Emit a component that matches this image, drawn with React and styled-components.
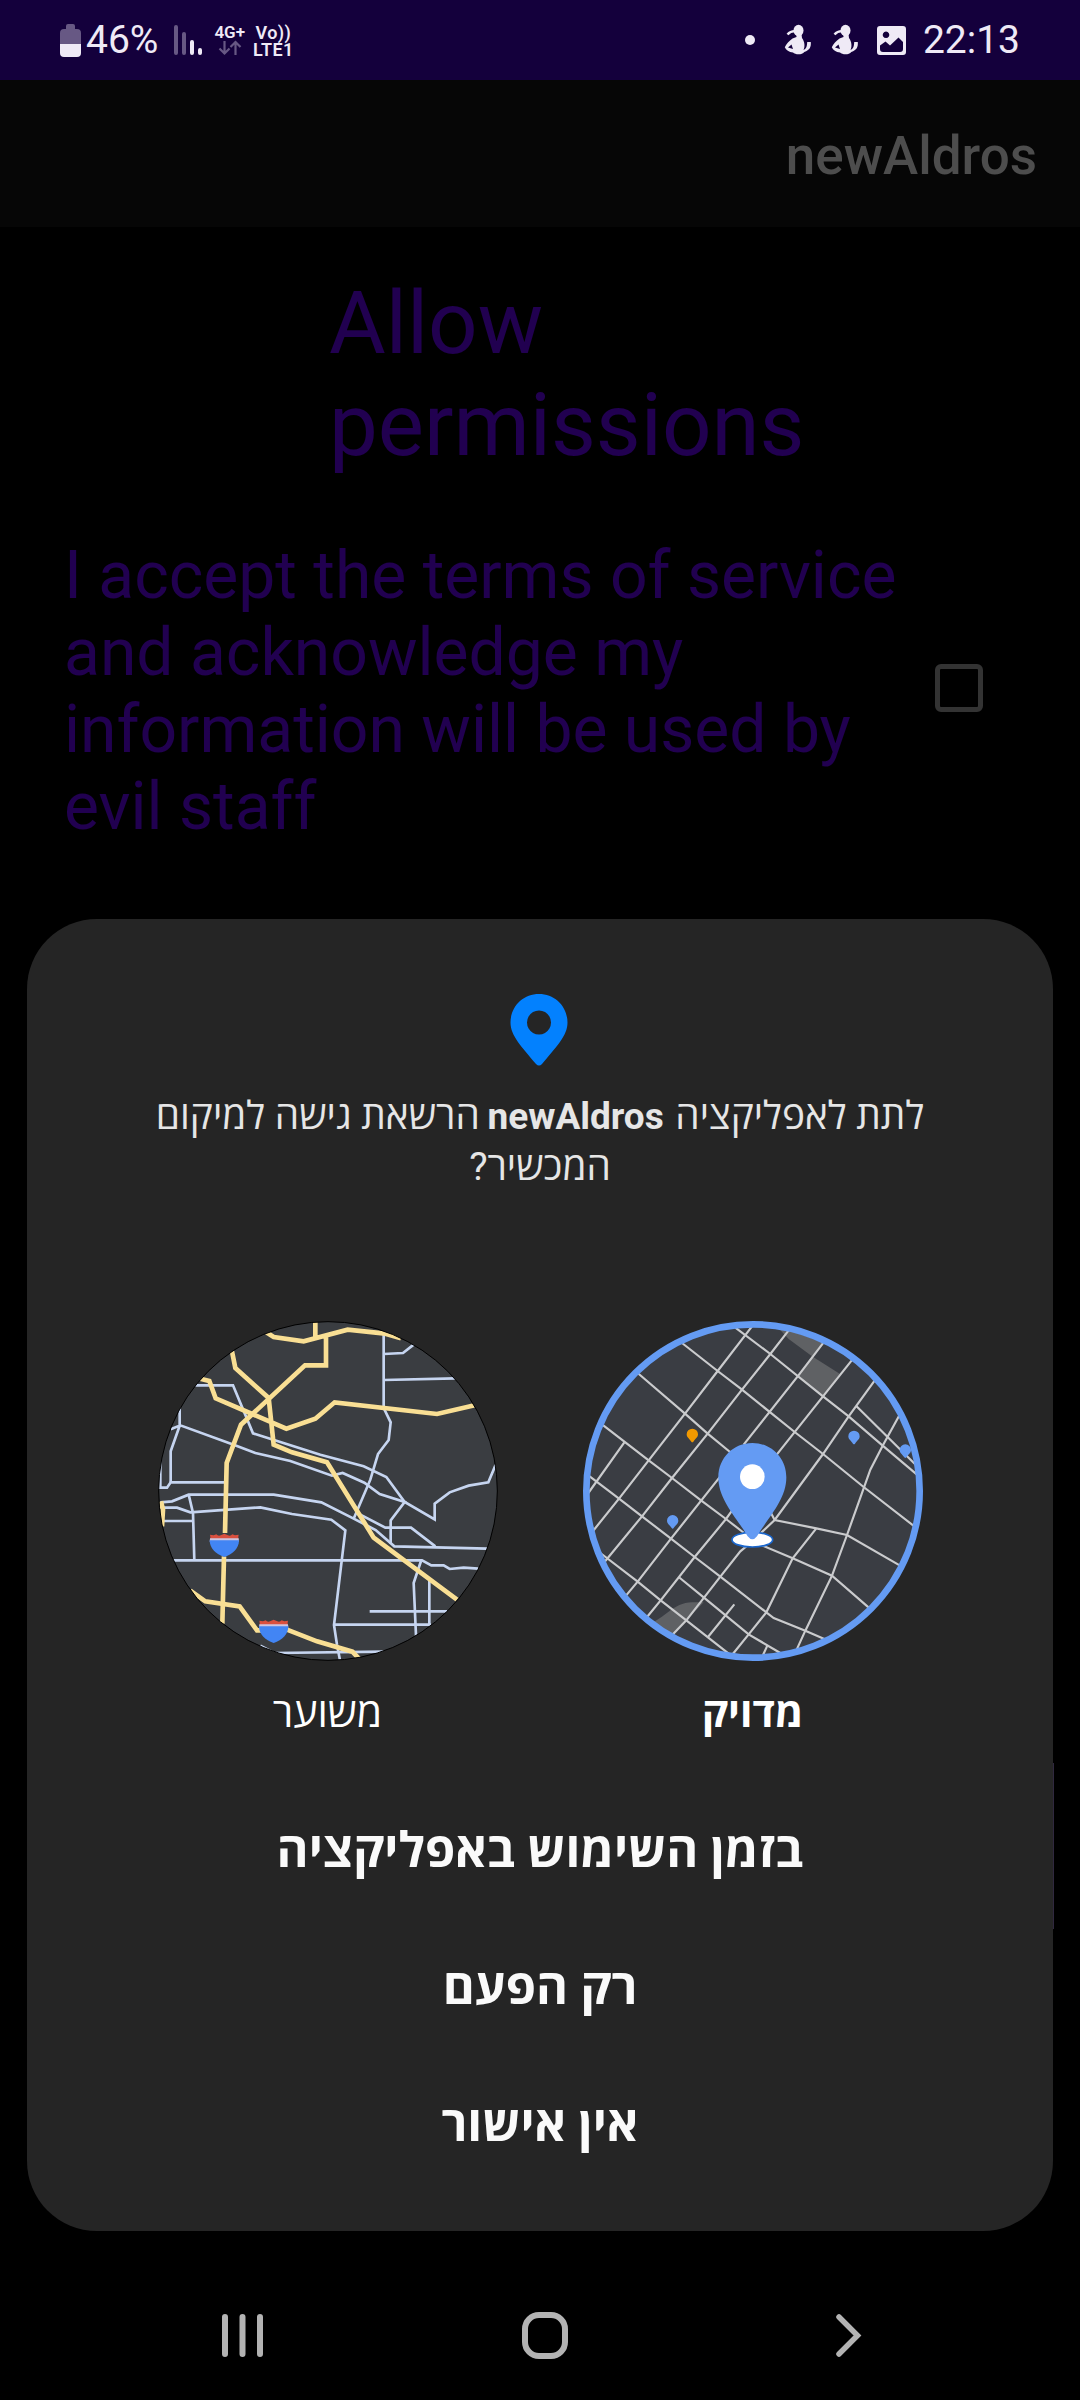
import React from 'react';
import styled, { createGlobalStyle } from 'styled-components';

const Global = createGlobalStyle`
  html, body { margin: 0; padding: 0; background: #000; }
  body { width: 1080px; height: 2400px; overflow: hidden; font-family: Roboto, "Open Sans", sans-serif; }
`;

const Screen = styled.div`
  width: 1080px; height: 2400px; display: flex; flex-direction: column; background: #000; direction: rtl; position: relative;
`;
const StatusBar = styled.header`
  height: 80px; background: #14003c; display: flex; align-items: center; justify-content: space-between;
  direction: ltr; padding: 0 60px 0 60px; box-sizing: border-box; color: #efeaf6;
`;
const StatusGroup = styled.div`display: flex; align-items: center; height: 80px;`;
const StatusText = styled.span`
  font-size: ${(p) => p.$size}px; line-height: 46px; margin-left: ${(p) => p.$gap || 0}px; white-space: nowrap;
`;
const NetLabel = styled.div`
  display: flex; flex-direction: column; align-items: center; margin-left: ${(p) => p.$gap}px;
  font-weight: 600; font-size: ${(p) => p.$size || 17}px; line-height: 17px; height: 33px;
  letter-spacing: ${(p) => p.$track || 0}px;
`;
const NetRow = styled.span`display: flex; align-items: center; height: 17px; white-space: nowrap;`;
const Glyph = styled.svg`display: block; flex: none; margin-left: ${(p) => p.$gap || 0}px; overflow: visible;`;

const AppBar = styled.div`
  height: 147px; background: #060606; display: flex; align-items: center; padding: 5px 43px 0; box-sizing: border-box;
`;
const AppTitle = styled.h1`margin: 0; direction: ltr; font-size: 53px; font-weight: 500; color: #4d4d4d; line-height: 62px;`;

const Content = styled.main`direction: ltr; color: #210050; flex: none; height: 692px; box-sizing: border-box; padding-top: 45px;`;
const Heading = styled.h2`margin: 0 0 0 329px; width: 480px; font-weight: 400; font-size: 87px; line-height: 102px;`;
const Terms = styled.label`display: flex; align-items: center; margin: 61px 97px 0 64px; justify-content: space-between;`;
const TermsText = styled.span`width: 850px; font-size: 66px; line-height: 77px;`;
const Box = styled.span`width: 48px; height: 48px; box-sizing: border-box; border: 5px solid #333; border-radius: 6px; margin-bottom: 6px;`;

const Dialog = styled.section`
  margin: 0 27px; height: 1312px; box-sizing: border-box; background: #252525; border-radius: 70px; padding-top: 75px;
  display: flex; flex-direction: column; align-items: center; font-family: Roboto, "Open Sans", sans-serif; flex: none;
`;
const Question = styled.p`
  margin: 23px 0 0; text-align: center; color: #e6e6e6; font-size: 38.8px; line-height: 51px; height: 102px;
`;
const QuestionLine = styled.span`display: block; height: 51px; white-space: nowrap;`;
const AppName = styled.b`font-size: 37px; line-height: 1; margin: 0 2px 0 -2px;`;
const Maps = styled.div`display: flex; gap: 85px; margin-top: 129px;`;
const MapChoice = styled.div`display: flex; flex-direction: column; align-items: center; width: 340px;`;
const MapLabel = styled.span`margin-top: 25px; font-size: 41px; line-height: 54px; color: #fff; font-weight: ${(p) => (p.$on ? 700 : 400)};`;
const Actions = styled.div`display: flex; flex-direction: column; align-items: center; margin-top: 42px;`;
const Action = styled.button`
  border: 0; background: none; padding: 0; height: 137px; color: #fafafa; font: 700 48.8px/60px Roboto, "Open Sans", sans-serif; direction: rtl;
`;
const HiddenButtonEdge = styled.div`position: absolute; left: 1053px; top: 1763px; width: 1px; height: 166px; background: #30283f;`;
const NavBar = styled.nav`height: 169px; padding: 73px 0 0 221px; box-sizing: border-box; direction: ltr; display: flex; align-items: flex-start;`;

const Person = ({ gap }) => (
  <Glyph $gap={gap} width="28" height="32" viewBox="0 0 28 32" fill="#efeaf6">
    <ellipse cx="14.5" cy="6.5" rx="5" ry="5.7" />
    <path d="M12.5 10h5l.5 4c3 4 3 9 1.500 12 2.500-1 3.500-3 3.700-8l3.600 0c.4 5-1 8-6.500 10-2 3-9 3-11.300.5C5 28 2 26 .8 23.200 2.500 20 5 17 8.500 14.500l4-1.500z" />
    <path d="M3.500 10.500c2.500-3 5-3.500 8-3.300" stroke="#efeaf6" strokeWidth="2.400" fill="none" />
    <path d="M4 23.500l3.500-3 1.500 4.500z" fill="#14003c" />
  </Glyph>
);

const roads = {
  local: [
    'M165 257H278L338 401L540 465L670 500L738 532L793 607L883 659V612L928 578L985 558L1044 548L1066 495',
    'M118 320V378L91 455V548M91 389L120 377L280 435L345 460L450 484L575 528L607 520L672 549L718 583L793 607L751 662V732',
    'M60 480V565M50 564H80L91 548H252M60 608L95 605L145 585H400L543 608L640 657L706 691L762 740L1040 747',
    'M60 624H110L150 638L360 623L455 643L573 660L615 692L581 976L590 1035L599 1082M66 664H158M145 585L158 640L162 782',
    'M98 782H845L873 797H910L928 808L970 804L1014 807M730 100V325L751 368L745 421L713 463L690 540L640 657M730 163L788 160L820 135M730 241L945 236',
    'M660 645L735 684H812L885 740M842 784L820 850L827 1008M867 840V974M581 975H872M688 935H920M360 1038L402 1060L730 1056',
  ],
  highway: [
    'M525 60V112M378 98L400 112L490 125L622 90L735 102L782 116M557 105V197H494L302 375L259 490L254 700M251 770L246 972',
    'M275 155L285 205L385 295L400 435L455 458L560 488L700 714L950 900M180 237L207 244L226 296L438 387L525 357L583 308L890 343L1003 317',
    'M150 873L195 905L298 920L350 992L365 992M440 990L530 1025L636 1056L656 1077M62 605L68 630L65 680',
  ],
  streets: [
    'M525 84L630 163L788 290L865 350L967 438L1070 525M365 130L472 214L545 270L703 397L788 463L910 562L1062 680M232 220L374 342L442 402L520 466',
    'M126 375L265 482L335 535L422 602L497 658L555 703M85 528L176 597L245 650L332 717L403 772L480 831L618 938M120 760L232 846L301 902L378 962L505 1062',
    'M575 80L472 214L374 342L265 482L176 597L98 694M192 428L84 580M685 92L630 163L545 270L442 402L335 535L245 650L130 790',
    'M790 128L712 230L550 435M480 530L332 717L232 846L195 890M876 180L788 290L645 470M515 633L497 658L403 772L301 902L260 952',
    'M945 240L865 350L788 463L643 661L570 730L540 755L480 831L378 962L335 1007M887 318L1066 495M1018 345L967 438L930 510L860 706L815 828L735 993L708 1052',
    'M632 640L643 661L768 686L860 706L1018 797M600 735L697 776L815 828L928 926M768 686L697 776L618 938L565 1004L515 1066M618 938L640 955L735 993L792 1018',
    'M355 832L430 893L565 1004L660 1060M522 914L443 1012M620 1040L608 1066',
  ],
};

const Shield = ({ x, y }) => (
  <g transform={`translate(${x} ${y})`}>
    <path d="M2 18V9L1 3L12 5L20 2Q26 9 33 5L44 0L55 5Q62 9 68 2L76 5L87 3L86 9V18z" fill="#d9503f" />
    <path d="M1 14h86l1 10H0z" fill="#ccc4df" />
    <path d="M0 20h88c0 24-18 42-44 50C18 62 0 44 0 20z" fill="#4285f4" />
  </g>
);
const SmallPin = ({ x, y, color = '#649bf3' }) => (
  <path transform={`translate(${x} ${y})`} d="M0-17a17 17 0 0 1 17 17c0 9-7 12-14 22q-3 4-6 0C-10 12-17 9-17 0A17 17 0 0 1 0-17z" fill={color} />
);

const ApproximateMap = () => (
  <svg width="340" height="340" viewBox="53 64 1020 1020">
    <defs><clipPath id="coarse"><circle cx="563" cy="574" r="508" /></clipPath></defs>
    <circle cx="563" cy="574" r="508" fill="#3a3d41" />
    <g clipPath="url(#coarse)" fill="none" strokeLinejoin="miter">
      {roads.local.map((d) => <path key={d} d={d} stroke="#c6d5f0" strokeWidth="8" />)}
      {roads.highway.map((d) => <path key={d} d={d} stroke="#f9df94" strokeWidth="14" />)}
      <Shield x={208} y={702} />
      <Shield x={356} y={960} />
    </g>
    <circle cx="563" cy="574" r="508" fill="none" stroke="#000" strokeWidth="3" />
  </svg>
);

const PreciseMap = () => (
  <svg width="340" height="340" viewBox="68 64 1020 1020">
    <defs><clipPath id="fine"><circle cx="578" cy="574" r="498" /></clipPath></defs>
    <circle cx="578" cy="574" r="500" fill="#3a3d43" />
    <g clipPath="url(#fine)" fill="none">
      <path d="M640 70L685 92L788 128L755 170L685 118zM755 170L838 222L788 290L712 230zM270 970C310 960 340 905 400 908L430 908L378 962L335 1007z" fill="#5f6164" />
      {roads.streets.map((d) => <path key={d} d={d} stroke="#cacbcd" strokeWidth="6.500" />)}
      <SmallPin x={396} y={404} color="#f29900" />
      <SmallPin x={881} y={410} />
      <SmallPin x={1035} y={451} />
      <SmallPin x={337} y={663} />
    </g>
    <circle cx="578" cy="574" r="500" fill="none" stroke="#649bf3" strokeWidth="20" />
    <ellipse cx="576" cy="720" rx="61" ry="22" fill="#fff" stroke="#1a66cc" strokeWidth="5" />
    <path d="M576 430C632 430 678 474 678 533C678 600 626 650 590 710Q576 728 562 710C526 650 474 600 474 533C474 474 520 430 576 430z" fill="#649bf3" />
    <circle cx="576" cy="531" r="37" fill="#fff" />
  </svg>
);

export default function App() {
  return (
    <Screen>
      <Global />
      <StatusBar>
        <StatusGroup>
          <Glyph width="21" height="33" viewBox="0 0 21 33">
            <path d="M6 5V2q0-2 2-2h5q2 0 2 2v3h2q4 0 4 4v11H0V9q0-4 4-4z" fill="#675884" />
            <path d="M0 20h21v9q0 4-4 4H4q-4 0-4-4z" fill="#efeaf6" />
          </Glyph>
          <StatusText $size={39} $gap={5}>46%</StatusText>
          <Glyph $gap={16} width="28" height="30" viewBox="0 0 28 30" strokeWidth="4" strokeLinecap="round">
            <path d="M2 2v26M10 9v19" stroke="#675884" />
            <path d="M18 17v11M26 25v3" stroke="#efeaf6" />
          </Glyph>
          <NetLabel $gap={12}>
            <NetRow>4G+</NetRow>
            <Glyph width="22" height="14" viewBox="0 0 22 14" stroke="#675884" strokeWidth="2.200" fill="none">
              <path d="M5.500 0v12.500M.5 7.500l5 5 5-5M16.500 14V1M11.500 6l5-5 5 5" />
            </Glyph>
          </NetLabel>
          <NetLabel $gap={8} $size={18} $track={0.4}>
            <NetRow>Vo))</NetRow>
            <NetRow>LTE1</NetRow>
          </NetLabel>
        </StatusGroup>
        <StatusGroup>
          <Glyph width="10" height="10" viewBox="0 0 10 10"><circle cx="5" cy="5" r="5" fill="#efeaf6" /></Glyph>
          <Person gap={29} />
          <Person gap={19} />
          <Glyph $gap={18} width="29" height="29" viewBox="0 0 29 29">
            <path fill="#efeaf6" fillRule="evenodd" d="M3 0h23q3 0 3 3v23q0 3-3 3H3q-3 0-3-3V3q0-3 3-3zM3 19.500V23q0 3 3 3h17q3 0 3-3v-7l-4.500-4.500L13 19.500l-4.500-4zM9 5.500a3.300 3.300 0 1 0 .01 0z" />
          </Glyph>
          <StatusText $size={39} $gap={17}>22:13</StatusText>
        </StatusGroup>
      </StatusBar>
      <AppBar><AppTitle>newAldros</AppTitle></AppBar>
      <Content>
        <Heading>Allow permissions</Heading>
        <Terms>
          <TermsText>I accept the terms of service and acknowledge my information will be used by evil staff</TermsText>
          <Box />
        </Terms>
      </Content>
      <Dialog>
        <svg width="60" height="73" viewBox="0 0 60 73">
          <path fill="#0381fe" fillRule="evenodd" d="M29 0C45 0 57.500 12.500 57.500 28.500C57.500 42 46 53 32 70Q29 73 26 70C12 53 .5 42 .5 28.500C.5 12.500 13 0 29 0zM29 16.500a12 12 0 1 0 .01 0z" />
        </svg>
        <Question>
          <QuestionLine>לתת לאפליקציה <AppName>newAldros</AppName> הרשאת גישה למיקום</QuestionLine>
          <QuestionLine>המכשיר?</QuestionLine>
        </Question>
        <Maps>
          <MapChoice><PreciseMap /><MapLabel $on>מדויק</MapLabel></MapChoice>
          <MapChoice><ApproximateMap /><MapLabel>משוער</MapLabel></MapChoice>
        </Maps>
        <Actions>
          <Action>בזמן השימוש באפליקציה</Action>
          <Action>רק הפעם</Action>
          <Action>אין אישור</Action>
        </Actions>
      </Dialog>
      <HiddenButtonEdge />
      <NavBar>
        <Glyph width="43" height="63" viewBox="0 0 43 63" stroke="#b3b3b3" strokeWidth="6" strokeLinecap="round"><path d="M4 13v37M21.500 13v37M39 13v37" /></Glyph>
        <Glyph $gap={257} width="48" height="63" viewBox="0 0 48 63"><rect x="4" y="11" width="40" height="41" rx="14" fill="none" stroke="#b3b3b3" strokeWidth="6" /></Glyph>
        <Glyph $gap={266} width="28" height="63" viewBox="0 0 28 63" fill="none" stroke="#b3b3b3" strokeWidth="5.500" strokeLinecap="round"><path d="M4 13l18.500 18.500L4 50" /></Glyph>
      </NavBar>
    </Screen>
  );
}
